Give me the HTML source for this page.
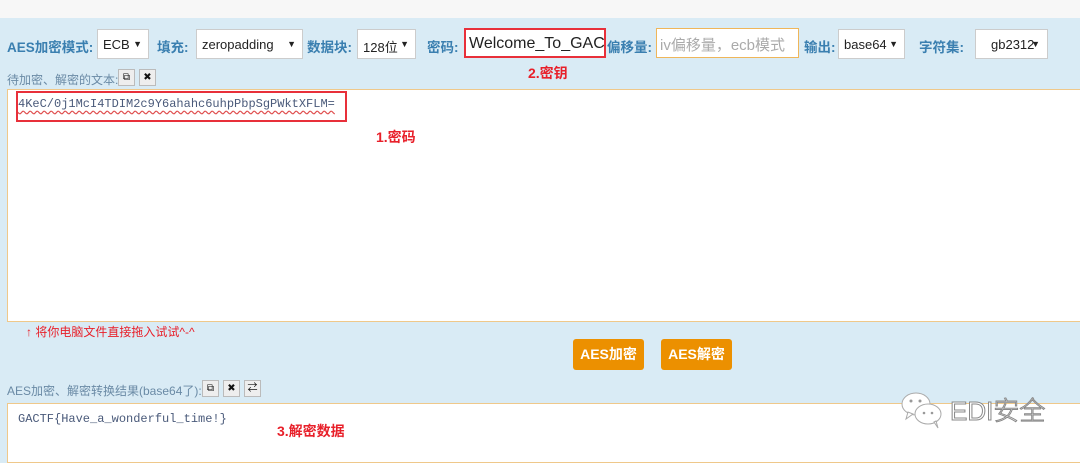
<!DOCTYPE html>
<html><head><meta charset="utf-8"><style>
*{box-sizing:border-box;margin:0;padding:0}
body{width:1080px;height:455px;overflow:hidden;background:#d9ebf5;font-family:"Liberation Sans","Noto Sans CJK SC",sans-serif;position:relative}
.top{position:absolute;left:0;top:0;width:1080px;height:18px;background:#f7f7f7}
.a{position:absolute;white-space:nowrap}
.lbl{font-weight:bold;color:#3a7fb0;font-size:13.5px}
.sel{position:absolute;background:#fff;border:1px solid #ccc;height:30px;top:29px;font-size:13px;color:#222;padding:7px 5px;white-space:nowrap}
.sel i{position:absolute;right:6px;top:9px;font-style:normal;font-size:9px}
.inp{position:absolute;background:#fff;height:30px;top:28px;font-size:16px;padding:5px 3px;white-space:nowrap;overflow:hidden}
.ta{position:absolute;left:7px;width:1073px;background:#fff;border:1px solid #efc88a;border-right:none}
.ib{position:absolute;width:17px;height:17px;background:#eee;border:1px solid #bbb;font-size:10px;text-align:center;line-height:15px;color:#111}
.btn{position:absolute;top:339px;width:71px;height:31px;background:#ec9000;border-radius:3px;color:#fff;font-size:14px;text-align:center;line-height:31px;font-weight:bold}
.red{color:#e8202a;font-weight:bold;font-size:14px}
.mono{font-family:"Liberation Mono","Noto Sans CJK SC",monospace;font-size:12px;color:#4a5a7a}
</style></head><body>
<div class="top"></div>
<div class="a lbl" style="left:7px;top:36px">AES加密模式:</div>
<div class="sel" style="left:97px;width:52px">ECB<i>▼</i></div>
<div class="a lbl" style="left:157px;top:36px">填充:</div>
<div class="sel" style="left:196px;width:107px">zeropadding<i>▼</i></div>
<div class="a lbl" style="left:307px;top:36px">数据块:</div>
<div class="sel" style="left:357px;width:59px">128位<i>▼</i></div>
<div class="a lbl" style="left:427px;top:36px">密码:</div>
<div class="inp" style="left:464px;width:142px;border:2px solid #e8303a;color:#222">Welcome_To_GAC</div>
<div class="a lbl" style="left:607px;top:36px">偏移量:</div>
<div class="inp" style="left:656px;width:143px;border:1px solid #efb65a;color:#aaa;font-size:15px">iv偏移量，ecb模式</div>
<div class="a lbl" style="left:804px;top:36px">输出:</div>
<div class="sel" style="left:838px;width:67px">base64<i>▼</i></div>
<div class="a lbl" style="left:919px;top:36px">字符集:</div>
<div class="sel" style="left:975px;width:73px;padding-left:15px">gb2312<i style="right:7px">▼</i></div>
<div class="a red" style="left:528px;top:63px">2.密钥</div>
<div class="a" style="left:7px;top:71px;font-size:12px;color:#6a8aa5">待加密、解密的文本:</div>
<div class="ib" style="left:118px;top:69px">⧉</div>
<div class="ib" style="left:139px;top:69px">✖</div>
<div class="ta" style="top:89px;height:233px"></div>
<div class="a" style="left:16px;top:91px;width:331px;height:31px;border:2px solid #e8303a"></div>
<div class="a mono" style="left:18px;top:97px;text-decoration:underline wavy #e05050;text-underline-offset:3px">4KeC/0j1McI4TDIM2c9Y6ahahc6uhpPbpSgPWktXFLM=</div>
<div class="a red" style="left:376px;top:127px">1.密码</div>
<div class="a" style="left:26px;top:323px;font-size:12px;color:#e8202a">↑ 将你电脑文件直接拖入试试^-^</div>
<div class="btn" style="left:573px">AES加密</div>
<div class="btn" style="left:661px">AES解密</div>
<div class="a" style="left:7px;top:382px;font-size:12px;color:#6a8aa5">AES加密、解密转换结果(base64了):</div>
<div class="ib" style="left:202px;top:380px">⧉</div>
<div class="ib" style="left:223px;top:380px">✖</div>
<div class="ib" style="left:244px;top:380px">⇄</div>
<div class="ta" style="top:403px;height:60px"></div>
<div class="a mono" style="left:18px;top:412px">GACTF{Have_a_wonderful_time!}</div>
<div class="a red" style="left:277px;top:421px">3.解密数据</div>
<svg class="a" style="left:900px;top:390px" width="45" height="40" viewBox="0 0 45 40"><g fill="#fff" stroke="#aaa" stroke-width="1"><ellipse cx="16" cy="14" rx="14" ry="11"/><path d="M8 22 L6 29 L13 24Z"/><ellipse cx="28" cy="24" rx="13" ry="10"/><path d="M34 32 L38 38 L36 31Z"/></g><g fill="#999"><circle cx="11" cy="11" r="1.5"/><circle cx="20" cy="11" r="1.5"/><circle cx="24" cy="23" r="1.3"/><circle cx="32" cy="23" r="1.3"/></g></svg>
<div class="a" style="left:950px;top:391px;font-size:26px;color:#fff;-webkit-text-stroke:1px #888;font-weight:300">EDI安全</div>
</body></html>
